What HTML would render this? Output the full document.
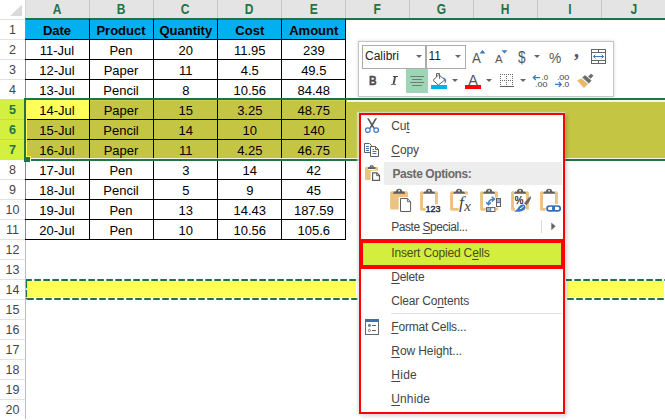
<!DOCTYPE html>
<html><head><meta charset="utf-8">
<style>
*{margin:0;padding:0;box-sizing:border-box}
html,body{width:665px;height:420px;overflow:hidden;background:#fff}
body{position:relative;font-family:"Liberation Sans",sans-serif;font-size:13px;color:#000}
.a{position:absolute}
.ch{position:absolute;top:0;height:18px;width:64px;text-align:center;font-weight:bold;color:#217346;font-size:14px;line-height:19.7px;border-left:1px solid #c6c6c6}
.rh{position:absolute;left:0;width:26px;height:20px;text-align:center;color:#444;font-size:12.5px;line-height:21px;border-top:1px solid #e1e1e1;border-right:1px solid #bcbcbc}
.rh.s{background:#d3ef3f;color:#217346;font-weight:bold;border-top:1px solid #d6cf4f;border-right:none;width:24px;padding-left:1px}
.c{position:absolute;width:64px;height:20px;text-align:center;line-height:24px;font-size:13px;white-space:nowrap;color:#000}
.h{font-weight:bold}
.k{background:#000;position:absolute}
.mi{position:absolute;left:391.3px;font-size:12px;color:#444;white-space:nowrap;line-height:14px}
.mi u{text-decoration:underline;text-underline-offset:1.8px;text-decoration-thickness:1px}
.dd{position:absolute;width:0;height:0;border-left:3px solid transparent;border-right:3px solid transparent;border-top:3.2px solid #666;margin-left:-0.9px}
</style></head><body>

<div class="a" style="left:25px;top:0;width:640px;height:18px;background:#e4e4e4"></div>
<div class="a" style="left:0;top:0;width:26px;height:20px;border-right:1px solid #d4d4d4;border-bottom:1px solid #d4d4d4"></div>
<svg class="a" style="left:10px;top:4px" width="13" height="12"><path d="M12 0.5 V12 H0 Z" fill="#dadada"/></svg>
<div class="ch" style="left:25px;border-left:none"><span style="display:inline-block;transform:scaleX(0.86)">A</span></div>
<div class="ch" style="left:89px"><span style="display:inline-block;transform:scaleX(0.86)">B</span></div>
<div class="ch" style="left:153px"><span style="display:inline-block;transform:scaleX(0.86)">C</span></div>
<div class="ch" style="left:217px"><span style="display:inline-block;transform:scaleX(0.86)">D</span></div>
<div class="ch" style="left:281px"><span style="display:inline-block;transform:scaleX(0.86)">E</span></div>
<div class="ch" style="left:345px"><span style="display:inline-block;transform:scaleX(0.86)">F</span></div>
<div class="ch" style="left:409px"><span style="display:inline-block;transform:scaleX(0.86)">G</span></div>
<div class="ch" style="left:473px"><span style="display:inline-block;transform:scaleX(0.86)">H</span></div>
<div class="ch" style="left:537px"><span style="display:inline-block;transform:scaleX(0.86)">I</span></div>
<div class="ch" style="left:601px"><span style="display:inline-block;transform:scaleX(0.86)">J</span></div>
<div class="a" style="left:25px;top:17.5px;width:640px;height:2px;background:#217346"></div>
<div class="rh" style="top:19px">1</div>
<div class="rh" style="top:39px">2</div>
<div class="rh" style="top:59px">3</div>
<div class="rh" style="top:79px">4</div>
<div class="rh s" style="top:99px;border-top-color:#cfd8c4">5</div>
<div class="rh s" style="top:119px">6</div>
<div class="rh s" style="top:139px">7</div>
<div class="rh" style="top:159px;border-top-color:#c9d6cf">8</div>
<div class="rh" style="top:179px">9</div>
<div class="rh" style="top:199px">10</div>
<div class="rh" style="top:219px">11</div>
<div class="rh" style="top:239px">12</div>
<div class="rh" style="top:259px">13</div>
<div class="rh" style="top:279px">14</div>
<div class="rh" style="top:299px">15</div>
<div class="rh" style="top:319px">16</div>
<div class="rh" style="top:339px">17</div>
<div class="rh" style="top:359px">18</div>
<div class="rh" style="top:379px">19</div>
<div class="rh" style="top:399px">20</div>
<div class="a" style="left:26px;top:19.5px;width:320px;height:20px;background:#00b0f0"></div>
<div class="a" style="left:26px;top:100px;width:639px;height:58px;background:#c5c544"></div>
<div class="a" style="left:26px;top:100px;width:63px;height:19px;background:#ffff5a"></div>
<div class="a" style="left:347px;top:100.2px;width:318px;height:1.5px;background:#f4f2fb"></div>
<div class="a" style="left:90px;top:100px;width:255px;height:1px;background:#cdcd5c"></div>
<div class="a" style="left:27px;top:281px;width:637px;height:15.8px;background:#ffff57"></div>
<div class="c h" style="left:25px;top:19px">Date</div>
<div class="c h" style="left:89px;top:19px">Product</div>
<div class="c h" style="left:153.8px;top:19px">Quantity</div>
<div class="c h" style="left:217.8px;top:19px">Cost</div>
<div class="c h" style="left:281.8px;top:19px">Amount</div>
<div class="c" style="left:25px;top:39px">11-Jul</div>
<div class="c" style="left:89px;top:39px">Pen</div>
<div class="c" style="left:153.8px;top:39px">20</div>
<div class="c" style="left:217.8px;top:39px">11.95</div>
<div class="c" style="left:281.8px;top:39px">239</div>
<div class="c" style="left:25px;top:59px">12-Jul</div>
<div class="c" style="left:89px;top:59px">Paper</div>
<div class="c" style="left:153.8px;top:59px">11</div>
<div class="c" style="left:217.8px;top:59px">4.5</div>
<div class="c" style="left:281.8px;top:59px">49.5</div>
<div class="c" style="left:25px;top:79px">13-Jul</div>
<div class="c" style="left:89px;top:79px">Pencil</div>
<div class="c" style="left:153.8px;top:79px">8</div>
<div class="c" style="left:217.8px;top:79px">10.56</div>
<div class="c" style="left:281.8px;top:79px">84.48</div>
<div class="c" style="left:25px;top:99px">14-Jul</div>
<div class="c" style="left:89px;top:99px">Paper</div>
<div class="c" style="left:153.8px;top:99px">15</div>
<div class="c" style="left:217.8px;top:99px">3.25</div>
<div class="c" style="left:281.8px;top:99px">48.75</div>
<div class="c" style="left:25px;top:119px">15-Jul</div>
<div class="c" style="left:89px;top:119px">Pencil</div>
<div class="c" style="left:153.8px;top:119px">14</div>
<div class="c" style="left:217.8px;top:119px">10</div>
<div class="c" style="left:281.8px;top:119px">140</div>
<div class="c" style="left:25px;top:139px">16-Jul</div>
<div class="c" style="left:89px;top:139px">Paper</div>
<div class="c" style="left:153.8px;top:139px">11</div>
<div class="c" style="left:217.8px;top:139px">4.25</div>
<div class="c" style="left:281.8px;top:139px">46.75</div>
<div class="c" style="left:25px;top:159px">17-Jul</div>
<div class="c" style="left:89px;top:159px">Pen</div>
<div class="c" style="left:153.8px;top:159px">3</div>
<div class="c" style="left:217.8px;top:159px">14</div>
<div class="c" style="left:281.8px;top:159px">42</div>
<div class="c" style="left:25px;top:179px">18-Jul</div>
<div class="c" style="left:89px;top:179px">Pencil</div>
<div class="c" style="left:153.8px;top:179px">5</div>
<div class="c" style="left:217.8px;top:179px">9</div>
<div class="c" style="left:281.8px;top:179px">45</div>
<div class="c" style="left:25px;top:199px">19-Jul</div>
<div class="c" style="left:89px;top:199px">Pen</div>
<div class="c" style="left:153.8px;top:199px">13</div>
<div class="c" style="left:217.8px;top:199px">14.43</div>
<div class="c" style="left:281.8px;top:199px">187.59</div>
<div class="c" style="left:25px;top:219px">20-Jul</div>
<div class="c" style="left:89px;top:219px">Pen</div>
<div class="c" style="left:153.8px;top:219px">10</div>
<div class="c" style="left:217.8px;top:219px">10.56</div>
<div class="c" style="left:281.8px;top:219px">105.6</div>
<div class="k" style="left:25px;top:19px;width:1px;height:221px;background:#8c8c8c"></div>
<div class="k" style="left:89px;top:19px;width:1px;height:221px"></div>
<div class="k" style="left:153px;top:19px;width:1px;height:221px"></div>
<div class="k" style="left:217px;top:19px;width:1px;height:221px"></div>
<div class="k" style="left:281px;top:19px;width:1px;height:221px"></div>
<div class="k" style="left:345px;top:19px;width:1px;height:221px"></div>
<div class="k" style="left:25px;top:39px;width:321px;height:1px"></div>
<div class="k" style="left:25px;top:59px;width:321px;height:1px"></div>
<div class="k" style="left:25px;top:79px;width:321px;height:1px"></div>
<div class="k" style="left:25px;top:99px;width:321px;height:1px"></div>
<div class="k" style="left:25px;top:119px;width:321px;height:1px"></div>
<div class="k" style="left:25px;top:139px;width:321px;height:1px"></div>
<div class="k" style="left:25px;top:159px;width:321px;height:1px"></div>
<div class="k" style="left:25px;top:179px;width:321px;height:1px"></div>
<div class="k" style="left:25px;top:199px;width:321px;height:1px"></div>
<div class="k" style="left:25px;top:219px;width:321px;height:1px"></div>
<div class="k" style="left:25px;top:239px;width:321px;height:1px"></div>
<div class="a" style="left:27px;top:158px;width:638px;height:1px;background:#f6f6e0"></div>
<div class="a" style="left:26px;top:100px;width:1px;height:58px;background:#ffff55"></div>
<div class="a" style="left:24px;top:98px;width:641px;height:1.8px;background:#217346"></div>
<div class="a" style="left:31px;top:159px;width:634px;height:1.8px;background:#217346"></div>
<div class="a" style="left:24px;top:98px;width:2px;height:62px;background:#217346"></div>
<div class="a" style="left:26px;top:156px;width:5px;height:6px;background:#ffff55"></div>
<div class="a" style="left:29.7px;top:158.6px;width:1.3px;height:3.2px;background:#fff"></div>
<div class="a" style="left:24px;top:157.2px;width:5.7px;height:4.6px;background:#217346"></div>
<svg class="a" style="left:25px;top:277px" width="640" height="24"><path d="M1 3 H640" stroke="#217346" stroke-width="2" stroke-dasharray="6.6 2.4" stroke-dashoffset="0.7" fill="none"/><path d="M1 22 H640" stroke="#217346" stroke-width="2" stroke-dasharray="6.6 2.4" stroke-dashoffset="7.8" fill="none"/><path d="M1.5 2 V11.2 M1.5 12.9 V20 M1 21 L2.4 22.6" stroke="#217346" stroke-width="1.2"/></svg>
<div class="a" style="left:356.2px;top:281px;width:3px;height:16px;background:#fff"></div>
<div class="a" style="left:565px;top:278px;width:1.4px;height:23px;background:#fff"></div>
<div class="a" style="left:565px;top:281px;width:2px;height:16px;background:#fff"></div><div class="a" style="left:358px;top:41px;width:256px;height:56px;background:#fff;border:1px solid #c6c6c6;box-shadow:0 0 3px rgba(0,0,0,.18)"></div>
<div class="a" style="left:362px;top:45px;width:64px;height:24px;border:1px solid #ababab"></div>
<div class="a" style="left:426px;top:45px;width:40px;height:24px;border:1px solid #ababab"></div>
<div class="a" style="left:365px;top:49.2px;font-size:12px;line-height:14px;color:#222">Calibri</div>
<div class="a" style="left:428.5px;top:49.2px;font-size:12px;line-height:14px;color:#222">11</div>
<div class="dd" style="left:416.5px;top:55px"></div>
<div class="dd" style="left:456px;top:55px"></div>
<div class="a" style="left:472px;top:51.2px;font-size:14px;line-height:14px;color:#555;transform:scaleX(0.95);transform-origin:left">A</div>
<svg class="a" style="left:479px;top:50px" width="7" height="4"><path d="M0.5 3.5 L3.5 0 L6.5 3.5Z" fill="#3b78c4"/></svg>
<div class="a" style="left:495px;top:52.5px;font-size:11.5px;line-height:12px;color:#555">A</div>
<svg class="a" style="left:501px;top:50px" width="7" height="4"><path d="M0.5 0.2 L6.5 0.2 L3.5 3.6Z" fill="#3b78c4"/></svg>
<div class="a" style="left:518px;top:49.5px;font-size:16px;line-height:16px;color:#555;transform:scaleX(0.85);transform-origin:left">$</div>
<div class="dd" style="left:535px;top:55px"></div>
<div class="a" style="left:549.4px;top:49.9px;font-size:15px;line-height:16px;color:#555;transform:scaleX(0.92);transform-origin:left">%</div>
<div class="a" style="left:574px;top:39.3px;font-size:20px;line-height:22px;font-weight:bold;color:#555;font-family:'Liberation Serif',serif">,</div>
<svg class="a" style="left:591px;top:49px" width="16" height="16" viewBox="0 0 16 16"><rect x="0.5" y="0.5" width="14" height="14" fill="#fff" stroke="#666"/><path d="M0.5 3.5H14.5M0.5 11.5H14.5M7.5 0.5V3.5M7.5 11.5V14.5" stroke="#666" fill="none"/><path d="M2.6 7.5H12.4" stroke="#3b78c4" stroke-width="1"/><path d="M4.4 5.7L2.4 7.5L4.4 9.3M10.6 5.7L12.6 7.5L10.6 9.3" stroke="#3b78c4" stroke-width="1" fill="none"/></svg>
<div class="a" style="left:368.6px;top:74.3px;font-size:12px;line-height:14px;font-weight:bold;color:#4c4c4c;-webkit-text-stroke:0.35px #4c4c4c;transform:scaleX(0.88);transform-origin:left">B</div>
<svg class="a" style="left:390px;top:75px" width="10" height="11" viewBox="0 0 10 11"><path d="M2.9 0.9 H8 V1.9 H2.9Z M1 8.9 H6.1 V9.8 H1Z M4.2 1.4 L6.1 1.4 L4.4 9.4 L2.5 9.4Z" fill="#4c4c4c"/></svg>
<div class="a" style="left:406px;top:69px;width:22px;height:24px;background:#9fd5b7"></div>
<svg class="a" style="left:406px;top:69px" width="22" height="24"><path d="M4.3 7.5H18M6 10.5H16M4.3 13.5H18M6 16.5H16" stroke="#6f7f76" stroke-width="1"/></svg>
<svg class="a" style="left:430px;top:73px" width="20" height="17" viewBox="0 0 20 17"><rect x="1" y="12" width="16" height="4" fill="#00b0f0"/><path d="M3 7.3 L8.7 1.8 L15 6.8 L8.4 12 Z" fill="#fff" stroke="#5e5e5e" stroke-width="1"/><path d="M6.5 3.9 V0.6 H9.6 V5.8" fill="none" stroke="#5e5e5e" stroke-width="1"/><path d="M13.3 3.9 Q18.6 6.8 14.2 11.2 Q15.8 7.6 13.3 3.9Z" fill="#3b78c4"/></svg>
<div class="dd" style="left:453px;top:79px"></div>
<div class="a" style="left:468.2px;top:72.5px;font-size:14.5px;line-height:14px;color:#555">A</div>
<div class="a" style="left:465px;top:85px;width:16px;height:4px;background:#ff0000"></div>
<div class="dd" style="left:487px;top:79px"></div>
<svg class="a" style="left:500px;top:74px" width="14" height="14" shape-rendering="crispEdges"><g fill="#6a6a6a"><rect x="0" y="0" width="1" height="1"/><rect x="0" y="2" width="1" height="1"/><rect x="0" y="4" width="1" height="1"/><rect x="0" y="6" width="1" height="1"/><rect x="0" y="8" width="1" height="1"/><rect x="0" y="10" width="1" height="1"/><rect x="2" y="0" width="1" height="1"/><rect x="2" y="6" width="1" height="1"/><rect x="4" y="0" width="1" height="1"/><rect x="4" y="6" width="1" height="1"/><rect x="6" y="0" width="1" height="1"/><rect x="6" y="2" width="1" height="1"/><rect x="6" y="4" width="1" height="1"/><rect x="6" y="6" width="1" height="1"/><rect x="6" y="8" width="1" height="1"/><rect x="6" y="10" width="1" height="1"/><rect x="8" y="0" width="1" height="1"/><rect x="8" y="6" width="1" height="1"/><rect x="10" y="0" width="1" height="1"/><rect x="10" y="6" width="1" height="1"/><rect x="12" y="0" width="1" height="1"/><rect x="12" y="2" width="1" height="1"/><rect x="12" y="4" width="1" height="1"/><rect x="12" y="6" width="1" height="1"/><rect x="12" y="8" width="1" height="1"/><rect x="12" y="10" width="1" height="1"/></g><rect x="0" y="12" width="13.5" height="1" fill="#5e5e5e"/></svg>
<div class="dd" style="left:521px;top:79px"></div>
<svg class="a" style="left:532px;top:73px" width="18" height="15" viewBox="0 0 18 15"><path d="M1.2 4.6H8M3.8 2.2L1.3 4.6L3.8 7" stroke="#3b78c4" stroke-width="1.2" fill="none"/><text x="9.6" y="6.5" font-family="Liberation Sans" font-size="7.8" fill="#3c3c3c" lengthAdjust="spacingAndGlyphs" textLength="6.6">.0</text><text x="3" y="13.8" font-family="Liberation Sans" font-size="7.8" fill="#3c3c3c" lengthAdjust="spacingAndGlyphs" textLength="12.4">.00</text></svg>
<svg class="a" style="left:554px;top:73px" width="18" height="15" viewBox="0 0 18 15"><text x="2.9" y="6.5" font-family="Liberation Sans" font-size="7.8" fill="#3c3c3c" lengthAdjust="spacingAndGlyphs" textLength="12.4">.00</text><path d="M1 11.4H7.4M4.8 9L7.3 11.4L4.8 13.8" stroke="#3b78c4" stroke-width="1.2" fill="none"/><text x="8.2" y="13.8" font-family="Liberation Sans" font-size="7.8" fill="#3c3c3c" lengthAdjust="spacingAndGlyphs" textLength="7">.0</text></svg>
<svg class="a" style="left:577px;top:73px" width="18" height="16" viewBox="0 0 18 16"><path d="M0.1 7.3 L4.5 5.5 L11.1 10.9 L7 15 L5.4 13.6Z" fill="#e9b96a"/><path d="M5.6 4.6 L8 2.4 L14.2 7.6 L11.9 10.2Z" fill="#6a6a6a" stroke="#6a6a6a" stroke-width="0.5" stroke-linejoin="round"/><path d="M11.4 3.4 L14 0.9 L16.2 2.6 L13.6 5.4Z" fill="#6a6a6a" stroke="#6a6a6a" stroke-width="0.5" stroke-linejoin="round"/></svg><div class="a" style="left:359px;top:113px;width:206px;height:301px;background:#fff;box-shadow:-1px 0 1px 1px rgba(228,228,228,.7),2px 2px 4px rgba(0,0,0,.18)"></div>
<div class="a" style="left:359px;top:113px;width:206px;height:301px;border:2px solid #ff0000;background:#fff"></div>
<div class="a" style="left:384px;top:162px;width:178px;height:22.5px;background:#ededed"></div>
<div class="a" style="left:359px;top:239px;width:206px;height:30px;background:#ff0000"></div>
<div class="a" style="left:363px;top:243px;width:198px;height:22px;background:#d3ee3c"></div>
<div class="a" style="left:391px;top:313px;width:171px;height:1px;background:#e2e2e2"></div>
<div class="mi" style="top:119.20px;letter-spacing:-0.15px">Cu<u>t</u></div>
<div class="mi" style="top:142.80px;letter-spacing:-0.1px"><u>C</u>opy</div>
<div class="mi" style="top:219.90px;letter-spacing:-0.46px">Paste <u>S</u>pecial...</div>
<div class="mi" style="top:246.00px;letter-spacing:-0.17px;color:#4a4a20">Insert Copied C<u>e</u>lls</div>
<div class="mi" style="top:270.10px;letter-spacing:-0.28px"><u>D</u>elete</div>
<div class="mi" style="top:293.90px;letter-spacing:-0.17px">Clear Co<u>n</u>tents</div>
<div class="mi" style="top:320.10px;letter-spacing:-0.2px"><u>F</u>ormat Cells...</div>
<div class="mi" style="top:344.00px;letter-spacing:-0.1px"><u>R</u>ow Height...</div>
<div class="mi" style="top:368.10px;letter-spacing:0.25px"><u>H</u>ide</div>
<div class="mi" style="top:392.00px;letter-spacing:0.1px"><u>U</u>nhide</div>
<div class="mi" style="top:167.30px;left:392.5px;font-weight:bold;color:#6a6a6a;letter-spacing:-0.42px">Paste Options:</div>
<div class="a" style="left:541px;top:220px;width:1px;height:13px;background:#dcdcdc"></div>
<svg class="a" style="left:551px;top:222px" width="5" height="9"><path d="M0.3 0.5 L4.6 4.3 L0.3 8.2Z" fill="#666"/></svg>
<svg class="a" style="left:364px;top:117px" width="16" height="17" viewBox="0 0 16 17"><path d="M3 1.2 L4.9 1.2 L8.7 7.6 L10.8 11 L9.6 11.7 L7.2 8.4Z" fill="#5e5e5e"/><path d="M13.1 1.2 L11.2 1.2 L7.4 7.6 L5.3 11 L6.5 11.7 L8.9 8.4Z" fill="#5e5e5e"/><circle cx="3.8" cy="13.1" r="2.3" fill="none" stroke="#3b78c4" stroke-width="1.15"/><circle cx="12.2" cy="13.1" r="2.3" fill="none" stroke="#3b78c4" stroke-width="1.15"/></svg>
<svg class="a" style="left:364px;top:143px" width="16" height="15" viewBox="0 0 16 15"><path d="M0.5 0.5 H5.5 L7.5 2.5 V9.5 H0.5Z" fill="#fff" stroke="#5e5e5e"/><path d="M2 3.5H5M2 5.5H5M2 7.5H5" stroke="#3b78c4" stroke-width="1"/><path d="M6.5 3.5 H11.5 L14.5 6.5 V13.5 H6.5Z" fill="#fff" stroke="#5e5e5e"/><path d="M11.5 3.5V6.5H14.5" fill="none" stroke="#5e5e5e"/><path d="M8.5 8.5H12.5M8.5 10.5H12.5M8.5 6.5H10" stroke="#3b78c4" stroke-width="1"/></svg>
<svg class="a" style="left:365px;top:165px" width="16" height="17" viewBox="0 0 16 17"><path d="M0 2.9 Q0 2 0.9 2 H12.1 Q13 2 13 2.9 V5.8 H5.7 V14.9 H0.9 Q0 14.9 0 14Z" fill="#ecc282"/><rect x="3.3" y="3.9" width="6.8" height="1.1" fill="#fff"/><rect x="3" y="2.1" width="7.4" height="1.9" fill="#5e5e5e"/><path d="M4.9 2.2 V1.2 Q4.9 0 6.7 0 Q8.5 0 8.5 1.2 V2.2Z" fill="#5e5e5e"/><circle cx="6.7" cy="1.1" r="0.55" fill="#fff"/><path d="M7.6 7.9 H11.9 L14.5 10.5 V15.3 H7.6Z" fill="#fff" stroke="#5e5e5e" stroke-width="1.2"/><path d="M11.7 7.9V10.7H14.5" fill="none" stroke="#5e5e5e" stroke-width="1"/></svg>
<svg class="a" style="left:365px;top:319px" width="14" height="16" viewBox="0 0 14 16"><rect x="0.5" y="0.5" width="13" height="15" fill="#fff" stroke="#666"/><rect x="0" y="0" width="14" height="3" fill="#3b6fb0"/><circle cx="4.4" cy="6.5" r="1.45" fill="#777"/><circle cx="4.4" cy="11.5" r="1.1" fill="#fff" stroke="#666" stroke-width="0.9"/><path d="M7 6.5H11M7 11.5H11" stroke="#666" stroke-width="1"/></svg>
<svg class="a" style="left:390px;top:188px" width="26" height="25" viewBox="0 0 26 25"><path d="M1.6 3.3 H16.4 Q17.9 3.3 17.9 4.8 V9 H8.7 V21.6 H1.6 Q0.1 21.6 0.1 20.1 V4.8 Q0.1 3.3 1.6 3.3Z" fill="#ecc282"/><path d="M3 5.8 L3.6 3.9 Q3.7 3.6 4.1 3.6 H6 A3.1 2.9 0 0 1 12.2 3.6 H14.1 Q14.5 3.6 14.6 3.9 L15.2 5.8Z" fill="#5e5e5e"/><circle cx="9.1" cy="2.7" r="0.85" fill="#fff"/><path d="M10.5 10.5 H17.4 L20.6 13.7 V23.5 H10.5Z" fill="#fff" stroke="#5e5e5e"/><path d="M17.4 10.5V13.7H20.6" fill="none" stroke="#5e5e5e" stroke-width="0.9"/></svg>
<svg class="a" style="left:420px;top:188px" width="26" height="25" viewBox="0 0 26 25"><path d="M1.6 3.3 H3 V20 H5.6 V22.7 H1.6 Q0.1 22.7 0.1 21.2 V4.8 Q0.1 3.3 1.6 3.3Z" fill="#ecc282"/><path d="M15 3.3 H16.4 Q17.9 3.3 17.9 4.8 V16 H15Z" fill="#ecc282"/><path d="M3 5.8 L3.6 3.9 Q3.7 3.6 4.1 3.6 H6 A3.1 2.9 0 0 1 12.2 3.6 H14.1 Q14.5 3.6 14.6 3.9 L15.2 5.8Z" fill="#5e5e5e"/><circle cx="9.1" cy="2.7" r="0.85" fill="#fff"/><text x="5.4" y="23.6" font-family="Liberation Sans" font-size="8.9" textLength="15" lengthAdjust="spacingAndGlyphs" fill="#222" stroke="#222" stroke-width="0.35">123</text></svg>
<svg class="a" style="left:450px;top:188px" width="26" height="25" viewBox="0 0 26 25"><path d="M1.6 3.3 H3 V20 H8.6 V22.7 H1.6 Q0.1 22.7 0.1 21.2 V4.8 Q0.1 3.3 1.6 3.3Z" fill="#ecc282"/><path d="M15 3.3 H16.4 Q17.9 3.3 17.9 4.8 V6.5 H15Z" fill="#ecc282"/><path d="M3 5.8 L3.6 3.9 Q3.7 3.6 4.1 3.6 H6 A3.1 2.9 0 0 1 12.2 3.6 H14.1 Q14.5 3.6 14.6 3.9 L15.2 5.8Z" fill="#5e5e5e"/><circle cx="9.1" cy="2.7" r="0.85" fill="#fff"/><text x="9" y="20.4" font-family="Liberation Serif" font-style="italic" font-size="17.5" fill="#444">f</text><text x="14.2" y="23" font-family="Liberation Serif" font-style="italic" font-size="15" fill="#444">x</text></svg>
<svg class="a" style="left:480px;top:188px" width="26" height="25" viewBox="0 0 26 25"><path d="M1.6 3.3 H3 V20 H5.7 V22.7 H1.6 Q0.1 22.7 0.1 21.2 V4.8 Q0.1 3.3 1.6 3.3Z" fill="#ecc282"/><path d="M15 3.3 H16.4 Q17.9 3.3 17.9 4.8 V9.6 H15Z" fill="#ecc282"/><rect x="15.5" y="19.6" width="2.4" height="2.7" fill="#ecc282"/><path d="M3 5.8 L3.6 3.9 Q3.7 3.6 4.1 3.6 H6 A3.1 2.9 0 0 1 12.2 3.6 H14.1 Q14.5 3.6 14.6 3.9 L15.2 5.8Z" fill="#5e5e5e"/><circle cx="9.1" cy="2.7" r="0.85" fill="#fff"/><rect x="16.5" y="10.5" width="4" height="8" fill="#fff" stroke="#5e5e5e" stroke-width="1"/><rect x="17" y="11" width="3" height="3.3" fill="#8db4e2"/><path d="M16.5 14.6H20.5" stroke="#5e5e5e" stroke-width="0.9"/><rect x="6.5" y="19.6" width="8.4" height="3.9" fill="#fff" stroke="#5e5e5e" stroke-width="1"/><rect x="7" y="20.1" width="3.4" height="2.9" fill="#8db4e2"/><path d="M10.7 19.6V23.5" stroke="#5e5e5e" stroke-width="0.9"/><path d="M8.4 15.6 Q8.8 11.6 13 11.2" fill="none" stroke="#3b78c4" stroke-width="1.4"/><path d="M11.6 8.8 L14.6 11.1 L11.8 13.6" fill="none" stroke="#3b78c4" stroke-width="1.4"/><path d="M6.2 14.2 L8.5 16.8 L10.9 14.4" fill="none" stroke="#3b78c4" stroke-width="1.4"/></svg>
<svg class="a" style="left:511px;top:188px" width="26" height="25" viewBox="0 0 26 25"><path d="M1.6 3.3 H3 V20 H4 V22.7 H1.6 Q0.1 22.7 0.1 21.2 V4.8 Q0.1 3.3 1.6 3.3Z" fill="#ecc282"/><path d="M15 3.3 H16.4 Q17.9 3.3 17.9 4.8 V21.4 H15Z" fill="#ecc282"/><path d="M3 5.8 L3.6 3.9 Q3.7 3.6 4.1 3.6 H6 A3.1 2.9 0 0 1 12.2 3.6 H14.1 Q14.5 3.6 14.6 3.9 L15.2 5.8Z" fill="#5e5e5e"/><circle cx="9.1" cy="2.7" r="0.85" fill="#fff"/><text x="3.7" y="16.1" font-family="Liberation Sans" font-size="10" textLength="8.6" lengthAdjust="spacingAndGlyphs" fill="#222" stroke="#222" stroke-width="0.25">%</text><path d="M20 8 Q20.4 11.4 17.8 14.6 L15.3 17.2 L13 15.2 L15.4 12.4 Q17.6 9.4 20 8Z" fill="#6a6a6a"/><path d="M3.2 23.8 Q6.4 21.6 8 18.6 Q9.8 16.2 12.4 16.5 Q15.2 17.4 14.4 20.4 Q12.6 24.2 3.2 23.8Z" fill="#3b78c4"/><path d="M9.4 20.6 Q11.6 19.8 12.4 18.4" stroke="#fff" stroke-width="1" fill="none" stroke-linecap="round"/></svg>
<svg class="a" style="left:540px;top:188px" width="26" height="25" viewBox="0 0 26 25"><path d="M1.6 3.3 H3 V20 H5.7 V22.7 H1.6 Q0.1 22.7 0.1 21.2 V4.8 Q0.1 3.3 1.6 3.3Z" fill="#ecc282"/><path d="M15 3.3 H16.4 Q17.9 3.3 17.9 4.8 V16 H15Z" fill="#ecc282"/><path d="M3 5.8 L3.6 3.9 Q3.7 3.6 4.1 3.6 H6 A3.1 2.9 0 0 1 12.2 3.6 H14.1 Q14.5 3.6 14.6 3.9 L15.2 5.8Z" fill="#5e5e5e"/><circle cx="9.1" cy="2.7" r="0.85" fill="#fff"/><rect x="7.05" y="18" width="7.2" height="4.9" rx="2.45" fill="none" stroke="#2e6db4" stroke-width="1.7"/><rect x="12.9" y="18" width="7.3" height="4.9" rx="2.45" fill="none" stroke="#2e6db4" stroke-width="1.7"/></svg>
</body></html>
